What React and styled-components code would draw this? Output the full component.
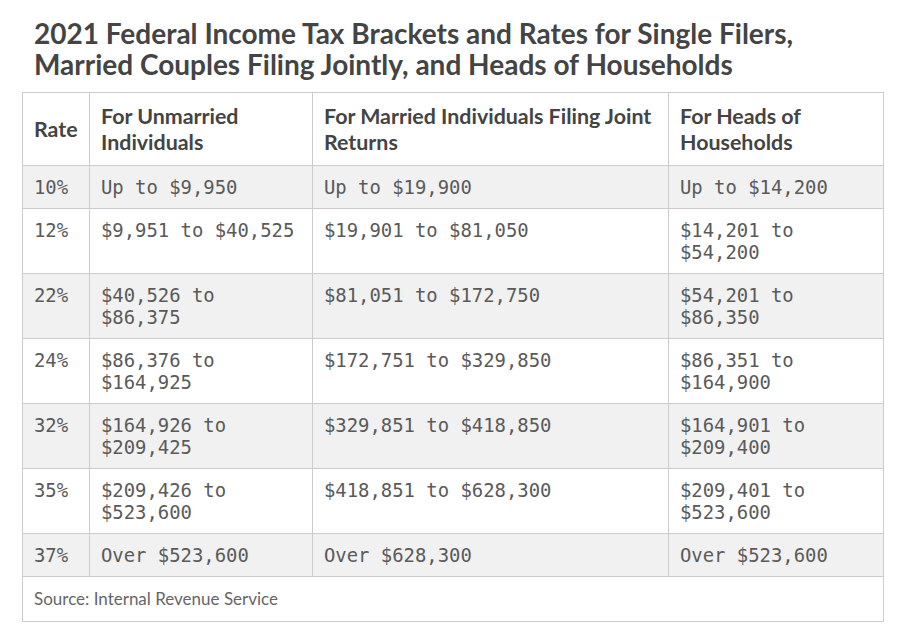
import styled, { createGlobalStyle } from "styled-components";

const GlobalStyle = createGlobalStyle`
  body {
    margin: 0;
    background: #ffffff;
    font-family: "Lato", "Liberation Sans", sans-serif;
  }
`;

const rows = [
  ["10%", "Up to $9,950", "Up to $19,900", "Up to $14,200"],
  ["12%", "$9,951 to $40,525", "$19,901 to $81,050", "$14,201 to $54,200"],
  ["22%", "$40,526 to $86,375", "$81,051 to $172,750", "$54,201 to $86,350"],
  ["24%", "$86,376 to $164,925", "$172,751 to $329,850", "$86,351 to $164,900"],
  ["32%", "$164,926 to $209,425", "$329,851 to $418,850", "$164,901 to $209,400"],
  ["35%", "$209,426 to $523,600", "$418,851 to $628,300", "$209,401 to $523,600"],
  ["37%", "Over $523,600", "Over $628,300", "Over $523,600"],
];

const App = () => {
  return (
    <Page>
      <GlobalStyle />
      <Title>
        2021 Federal Income Tax Brackets and Rates for Single Filers,
        <br />
        Married Couples Filing Jointly, and Heads of Households
      </Title>
      <Table>
        <colgroup>
          <col style={{ width: 67 }} />
          <col style={{ width: 223 }} />
          <col style={{ width: 356 }} />
          <col />
        </colgroup>
        <thead>
          <tr>
            <Head>Rate</Head>
            <Head>For Unmarried Individuals</Head>
            <Head>For Married Individuals Filing Joint Returns</Head>
            <Head>For Heads of Households</Head>
          </tr>
        </thead>
        <tbody>
          {rows.map((row, i) => (
            <Row key={row[0]} $shaded={i % 2 === 0}>
              {row.map((cell, j) => (
                <Cell key={j}>{cell}</Cell>
              ))}
            </Row>
          ))}
          <tr>
            <Source colSpan={4}>Source: Internal Revenue Service</Source>
          </tr>
        </tbody>
      </Table>
    </Page>
  );
};

export default App;

const Page = styled.div`
  padding: 18px 20px 16px 22px;
  width: 862px;
`;

const Title = styled.h1`
  font-family: "Lato", "Liberation Sans", sans-serif;
  font-weight: 700;
  font-size: 28px;
  line-height: 31px;
  color: #444444;
  margin: 0 0 12px 12px;
`;

const Table = styled.table`
  width: 862px;
  border-collapse: collapse;
  table-layout: fixed;
  border: 1px solid #cccccc;
`;

const Head = styled.th`
  text-align: left;
  vertical-align: middle;
  font-family: "Lato", "Liberation Sans", sans-serif;
  font-weight: 700;
  font-size: 21.4px;
  line-height: 26px;
  color: #444444;
  padding: 10px 11px 10px 11px;
  border: 1px solid #cccccc;
`;

const Row = styled.tr`
  background: ${(p) => (p.$shaded ? "#f1f1f1" : "#ffffff")};
`;

const Cell = styled.td`
  vertical-align: top;
  font-family: "DejaVu Sans Mono", "Liberation Mono", monospace;
  font-size: 18.9px;
  line-height: 22px;
  color: #5a5a5a;
  padding: 10px 11px 10px 11px;
  border: 1px solid #cccccc;
`;

const Source = styled.td`
  font-family: "Lato", "Liberation Sans", sans-serif;
  font-size: 17px;
  line-height: 24px;
  color: #666666;
  padding: 10px 11px 10px 11px;
  border: 1px solid #cccccc;
`;
